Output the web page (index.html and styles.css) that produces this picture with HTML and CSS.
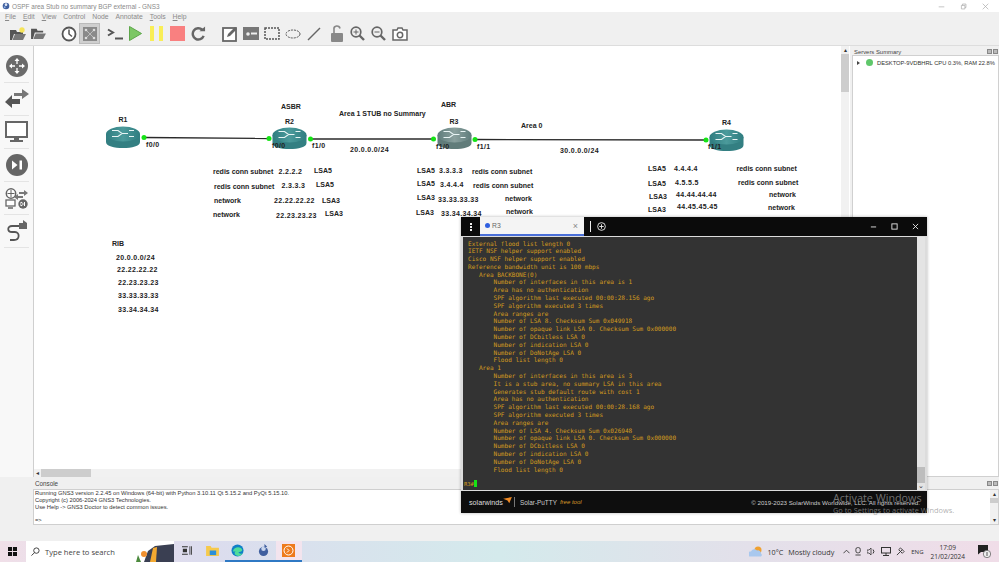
FILE: index.html
```html
<!DOCTYPE html>
<html lang="en">
<head>
<meta charset="utf-8">
<title>OSPF area Stub no summary BGP external - GNS3</title>
<link rel="stylesheet" href="styles.css">
</head>
<body>
<div class="app">
  <header class="titlebar">
    <svg class="appicon" viewBox="0 0 12 12"><circle cx="6" cy="6" r="5" fill="#3f5f9f"/><circle cx="6" cy="4" r="2" fill="#dfe7f5"/><circle cx="4" cy="8" r="1.5" fill="#8fb0e0"/></svg>
    <span class="title">OSPF area Stub no summary BGP external - GNS3</span>
    <div class="winctl">
      <svg viewBox="0 0 10 10"><path d="M1 5.5h8" stroke="#aaa" fill="none"/></svg>
      <svg viewBox="0 0 10 10"><path d="M2 3.5h5v5H2zM3.5 3.5V1.500h5v5H7" stroke="#aaa" fill="none"/></svg>
      <svg viewBox="0 0 10 10"><path d="M1 1l8 8M9 1l-8 8" stroke="#aaa" fill="none"/></svg>
    </div>
  </header>
  <nav class="menubar">
    <span><u>F</u>ile</span><span><u>E</u>dit</span><span><u>V</u>iew</span><span>Control</span><span>Node</span><span>Annotate</span><span><u>T</u>ools</span><span><u>H</u>elp</span>
  </nav>
  <div class="toolbar">
    <div class="tb"><svg viewBox="0 0 18 14" width="18" height="14"><path d="M1 13V3h6l1 2h6v2H5L3 13z" fill="#555"/><path d="M3.500 13L6 7h11l-3 6z" fill="#777"/><circle cx="13" cy="3" r="2.700" fill="#f6e45a"/></svg></div>
    <div class="tb"><svg viewBox="0 0 18 14" width="17" height="13"><path d="M1 13V2h6l1 2h6v2H5L3 13z" fill="#555"/><path d="M3.500 13L6 7h11l-3 6z" fill="#777"/></svg></div>
    <div class="tb g9"><svg viewBox="0 0 16 16" width="16" height="16"><circle cx="8" cy="8" r="6.500" fill="#fff" stroke="#555" stroke-width="1.800"/><path d="M8 3.500V8l3 2.500" stroke="#555" stroke-width="1.500" fill="none"/></svg></div>
    <div class="tb sel"><svg viewBox="0 0 14 14" width="14" height="14"><rect width="14" height="14" fill="#8a8a8a"/><path d="M3 3l8 8M11 3l-8 8" stroke="#bbb"/><circle cx="3" cy="3" r="1.300" fill="#ddd"/><circle cx="11" cy="3" r="1.300" fill="#ddd"/><circle cx="3" cy="11" r="1.300" fill="#ddd"/><circle cx="11" cy="11" r="1.300" fill="#ddd"/></svg></div>
    <div class="tb g4"><svg viewBox="0 0 16 12" width="16" height="12"><path d="M1 1.500L6 4.500 1 7.500" stroke="#555" stroke-width="2" fill="none"/><path d="M8 10.500h8" stroke="#555" stroke-width="2"/></svg></div>
    <div class="tb"><svg viewBox="0 0 13 15" width="13" height="15"><path d="M0.500 0.500L12.500 7.500 0.500 14.500z" fill="#7cc765" stroke="#5da64a"/></svg></div>
    <div class="tb"><svg viewBox="0 0 13 15" width="13" height="15"><rect width="4" height="15" fill="#f9ee56"/><rect x="9" width="4" height="15" fill="#f9ee56"/></svg></div>
    <div class="tb"><svg viewBox="0 0 15 15" width="15" height="15"><rect width="15" height="15" fill="#f98080"/></svg></div>
    <div class="tb"><svg viewBox="0 0 16 16" width="15" height="15"><path d="M13.500 10.500A6 6 0 1 1 12 4" stroke="#666" stroke-width="2.600" fill="none"/><path d="M9 5.500h6v-5z" fill="#666"/></svg></div>
    <div class="tb g10"><svg viewBox="0 0 16 16" width="16" height="16"><rect x="1" y="2" width="13" height="13" fill="#fff" stroke="#666" stroke-width="1.800"/><path d="M5 11l1-3 7-7 2 2-7 7z" fill="#666"/></svg></div>
    <div class="tb"><svg viewBox="0 0 16 13" width="16" height="13"><rect width="16" height="13" fill="#777"/><circle cx="5" cy="7" r="1.800" fill="#eee"/><path d="M8 7.500h6v-2H8z" fill="#eee"/></svg></div>
    <div class="tb"><svg viewBox="0 0 16 13" width="16" height="13"><rect x="1" y="1" width="14" height="11" fill="none" stroke="#555" stroke-width="1.500" stroke-dasharray="2 1"/></svg></div>
    <div class="tb"><svg viewBox="0 0 16 10" width="16" height="10"><ellipse cx="8" cy="5" rx="7" ry="4" fill="none" stroke="#555" stroke-dasharray="2 1"/></svg></div>
    <div class="tb"><svg viewBox="0 0 14 14" width="14" height="14"><path d="M1 13L13 1" stroke="#666" stroke-width="1.500"/></svg></div>
    <div class="tb g2"><svg viewBox="0 0 14 17" width="14" height="17"><path d="M4 8V4.500a3 3 0 0 1 6-1" fill="none" stroke="#888" stroke-width="1.600"/><rect x="1" y="8" width="12" height="9" rx="1" fill="#888"/></svg></div>
    <div class="tb"><svg viewBox="0 0 15 15" width="15" height="15"><circle cx="6" cy="6" r="4.800" fill="none" stroke="#666" stroke-width="1.700"/><path d="M9.500 9.500L14 14" stroke="#666" stroke-width="2.400"/><path d="M3.500 6h5M6 3.500v5" stroke="#666"/></svg></div>
    <div class="tb"><svg viewBox="0 0 15 15" width="15" height="15"><circle cx="6" cy="6" r="4.800" fill="none" stroke="#666" stroke-width="1.700"/><path d="M9.500 9.500L14 14" stroke="#666" stroke-width="2.400"/><path d="M3.500 6h5" stroke="#666"/></svg></div>
    <div class="tb"><svg viewBox="0 0 16 14" width="16" height="14"><path d="M1 3h4l1-2h4l1 2h4v10H1z" fill="#fff" stroke="#666" stroke-width="1.500"/><circle cx="8" cy="8" r="2.700" fill="none" stroke="#666" stroke-width="1.500"/></svg></div>
  </div>
  <div class="workspace">
    <div class="upper">
      <aside class="dock">
        <div class="dockitem"><svg viewBox="0 0 22 22" width="22" height="22"><circle cx="11" cy="11" r="11" fill="#6b6b6b"/><path d="M11 3l2.500 3h-5zM11 19l2.500-3h-5zM3 11l3-2.500v5zM19 11l-3-2.500v5z" fill="#fff"/><path d="M11 6v3M11 13v3M6 11h3M13 11h3" stroke="#fff" stroke-width="1.300"/></svg></div>
        <div class="dockitem"><svg viewBox="0 0 24 20" width="24" height="20"><path d="M9 4h8V0l7 5-7 5V7H9z" fill="#777"/><path d="M15 10H7V6L0 13l7 6v-4h8z" fill="#555"/></svg></div>
        <div class="dockitem"><svg viewBox="0 0 23 23" width="23" height="23"><rect x="1" y="1" width="21" height="15" fill="#fff" stroke="#666" stroke-width="2"/><path d="M9 17h5v2h4v2H5v-2h4z" fill="#666"/></svg></div>
        <div class="dockitem"><svg viewBox="0 0 22 22" width="22" height="22"><circle cx="11" cy="11" r="11" fill="#666"/><path d="M6 6.500L11.500 11 6 15.500z" fill="#fff"/><rect x="13.500" y="6.500" width="2.500" height="9" fill="#fff"/></svg></div>
        <div class="dockitem"><svg viewBox="0 0 23 21" width="23" height="21"><circle cx="6" cy="5.500" r="4.700" fill="#fff" stroke="#666" stroke-width="1.500"/><path d="M6 2v7M2.500 5.500h7" stroke="#666"/><path d="M14 4h5V2l4 3-4 3V6h-5zM18 8h-5V6l-4 3 4 3v-2h5z" fill="#777"/><rect x="1" y="12" width="9" height="6" fill="#fff" stroke="#666" stroke-width="1.300"/><path d="M3 20h5" stroke="#666" stroke-width="1.500"/><circle cx="18" cy="16" r="4.700" fill="#666"/><path d="M16 14l2.500 2-2.500 2zM19.500 14v4" stroke="#fff"/></svg></div>
        <div class="dockitem"><svg viewBox="0 0 22 24" width="22" height="24"><path d="M15 7H6c-5 0-5 6 0 6h3c5 0 5 8-1 8H4" fill="none" stroke="#555" stroke-width="1.800"/><path d="M13 4h8v6h-8z" fill="#666"/><path d="M17 1l4 3-4 2z" fill="#666"/></svg></div>
      </aside>
      <main class="canvas">
        <svg class="scene" viewBox="34 47 807 423" width="807" height="423">
          <defs>
            <linearGradient id="body" x1="0" x2="1" y1="0" y2="0"><stop offset="0" stop-color="#2f7d80"/><stop offset=".5" stop-color="#4b9a9b"/><stop offset="1" stop-color="#2f7d80"/></linearGradient>
            <linearGradient id="bodyg" x1="0" x2="1" y1="0" y2="0"><stop offset="0" stop-color="#5f7d7c"/><stop offset=".5" stop-color="#8aa09e"/><stop offset="1" stop-color="#5f7d7c"/></linearGradient>
            <g id="marks"><path d="M-11 -3.500h6l4 3h6M-11 2.500h6l4 -3h6M11 -3.500h-5M11 2.500h-5" stroke="#e8f4f4" stroke-width="1.100" fill="none"/></g>
          </defs>
          <path class="link" d="M144 138.500L269 139.500"/>
          <path class="link" d="M310 140L433 140"/>
          <path class="link" d="M475 140.500L706 141"/>
          <g transform="translate(123 135)"><path d="M-17 0v8c0 4 8 6 17 6s17-2 17-6V0z" fill="#337f82"/><ellipse rx="17" ry="7.500" fill="url(#body)"/><use href="#marks"/></g>
          <g transform="translate(289.500 136)"><path d="M-17 0v8c0 4 8 6 17 6s17-2 17-6V0z" fill="#337f82"/><ellipse rx="17" ry="7.500" fill="url(#body)"/><use href="#marks"/></g>
          <g transform="translate(454.500 136)"><path d="M-17 0v8c0 4 8 6 17 6s17-2 17-6V0z" fill="#617c7a"/><ellipse rx="17" ry="7.500" fill="url(#bodyg)"/><use href="#marks"/></g>
          <g transform="translate(726.500 138)"><path d="M-17 0v8c0 4 8 6 17 6s17-2 17-6V0z" fill="#337f82"/><ellipse rx="17" ry="7.500" fill="url(#body)"/><use href="#marks"/></g>
          <circle class="dot" cx="144" cy="138.500" r="2.500"/><circle class="dot" cx="269" cy="139.500" r="2.500"/>
          <circle class="dot" cx="310.500" cy="140" r="2.500"/><circle class="dot" cx="433.500" cy="140" r="2.500"/>
          <circle class="dot" cx="475" cy="140.500" r="2.500"/><circle class="dot" cx="706" cy="141" r="2.500"/>

          <text x="118.500" y="123">R1</text><text x="285" y="125">R2</text><text x="449.500" y="125">R3</text><text x="722" y="125.500">R4</text>
          <text x="281" y="110">ASBR</text><text x="339" y="117">Area 1 STUB no Summary</text><text x="441" y="107.500">ABR</text><text x="521" y="128.500">Area 0</text>
          <text class="w" x="146" y="147.500">f0/0</text><text class="w" x="272" y="148.500">f0/0</text><text class="w" x="312" y="149">f1/0</text><text class="w" x="436" y="149.500">f1/0</text><text class="w" x="477" y="149.500">f1/1</text><text class="w" x="708" y="149.500">f1/1</text>
          <text class="w" x="350" y="153">20.0.0.0/24</text><text class="w" x="560" y="154">30.0.0.0/24</text>

          <text x="213" y="175">redis conn subnet</text><text class="w" x="278.500" y="175">2.2.2.2</text><text x="314" y="174">LSA5</text>
          <text x="214" y="190">redis conn subnet</text><text class="w" x="281.500" y="189">2.3.3.3</text><text x="316" y="188">LSA5</text>
          <text x="214" y="203.500">network</text><text class="w" x="274" y="203.500">22.22.22.22</text><text x="322" y="203.500">LSA3</text>
          <text x="213" y="217.500">network</text><text class="w" x="276" y="218.500">22.23.23.23</text><text x="325" y="216.500">LSA3</text>

          <text x="417" y="173.500">LSA5</text><text class="w" x="439" y="173.500">3.3.3.3</text><text x="472" y="175">redis conn subnet</text>
          <text x="417" y="186.500">LSA5</text><text class="w" x="440" y="188">3.4.4.4</text><text x="473" y="189">redis conn subnet</text>
          <text x="417" y="200.500">LSA3</text><text class="w" x="438" y="202.500">33.33.33.33</text><text x="505" y="202">network</text>
          <text x="416" y="215.500">LSA3</text><text class="w" x="441" y="216.500">33.34.34.34</text><text x="506" y="214.500">network</text>

          <text x="648" y="172">LSA5</text><text class="w" x="674" y="172">4.4.4.4</text><text x="736.500" y="172">redis conn subnet</text>
          <text x="648" y="186.500">LSA5</text><text class="w" x="675" y="185.500">4.5.5.5</text><text x="738" y="185.500">redis conn subnet</text>
          <text x="649" y="199.500">LSA3</text><text class="w" x="676" y="197.500">44.44.44.44</text><text x="769" y="198">network</text>
          <text x="648" y="212.500">LSA3</text><text class="w" x="677" y="209.500">44.45.45.45</text><text x="768" y="210.500">network</text>

          <text x="112" y="246.500">RIB</text>
          <text class="w" x="116" y="260.500">20.0.0.0/24</text><text class="w" x="117" y="273">22.22.22.22</text><text class="w" x="118" y="285.500">22.23.23.23</text><text class="w" x="118" y="299">33.33.33.33</text><text class="w" x="118" y="312.500">33.34.34.34</text>
        </svg>
        <div class="vscroll"><i class="arr">▴</i><i class="vthumb"></i></div>
        <div class="hscroll"><i class="arr">◂</i><i class="hthumb"></i></div>
      </main>
      <aside class="servers">
        <div class="dockhead"><span>Servers Summary</span><span class="dockbtns"><i></i><i></i></span></div>
        <div class="tree">
          <span class="twist"></span>
          <span class="led"></span>
          <span class="srv">DESKTOP-9VDBHRL CPU 0.3%, RAM 22.8%</span>
        </div>
      </aside>
    </div>
    <section class="console">
      <div class="dockhead conhead"><span>Console</span><span class="dockbtns"><i></i><i></i></span></div>
      <div class="conbody">
        <pre class="conlog">Running GNS3 version 2.2.45 on Windows (64-bit) with Python 3.10.11 Qt 5.15.2 and PyQt 5.15.10.
Copyright (c) 2006-2024 GNS3 Technologies.
Use Help -&gt; GNS3 Doctor to detect common issues.

=&gt;</pre>
        <div class="conscroll"><i class="arr">▴</i><i class="conthumb"></i><i class="arr arrdown">▾</i></div>
      </div>
    </section>
    <div class="status"></div>
  </div>
  <footer class="taskbar">
    <svg class="winlogo" viewBox="0 0 10 10"><path d="M0 0h4.500v4.500H0zM5.500 0H10v4.500H5.500zM0 5.500h4.500V10H0zM5.500 5.500H10V10H5.500z" fill="#111"/></svg>
    <div class="search">
      <svg viewBox="0 0 10 10" width="9" height="9"><circle cx="6" cy="4" r="3" fill="none" stroke="#333"/><path d="M4 6.200L0.500 9.500" stroke="#333"/></svg>
      <span class="searchtext">Type here to search</span>
      <svg class="searchart" viewBox="0 0 40 21" width="40" height="21"><rect width="40" height="21" fill="#fff"/><path d="M10 21l4-11 7-5 19-2v18z" fill="#3a3f52"/><path d="M16 21l3-14 4-1-1 15z" fill="#f3a931"/><path d="M2 21l2-7 3 7z" fill="#4c8a3d"/><circle cx="10" cy="13" r="3" fill="#f0902f"/></svg>
    </div>
    <div class="tbicons">
      <span class="ti"><svg viewBox="0 0 12 10" width="10" height="9"><path d="M0 0h7v1H0zM0 9h7v1H0zM1 3h5v4H1zM9 0h1v10H9zM11 0h1v10h-1z" fill="#333"/></svg></span>
      <span class="ti"><svg viewBox="0 0 14 12" width="13" height="11"><path d="M0 1h5l1 2h8v9H0z" fill="#f6c94c"/><rect x="4" y="6" width="7" height="5" fill="#2a8fd8"/></svg></span>
      <span class="ti active"><svg viewBox="0 0 14 14" width="13" height="13"><circle cx="7" cy="7" r="6.500" fill="#0f7fc8"/><path d="M2 8c1-5 8-6 10-2 .5 2-2 3-4 2.500 2 3 4 2 5 1-1 3-5 4-7 3C4 11.500 3 9 5 8z" fill="#4fdc9a"/></svg></span>
      <span class="ti active"><svg viewBox="0 0 12 14" width="11" height="13"><circle cx="6" cy="8" r="5" fill="#3f5f9f"/><circle cx="6" cy="5" r="2.500" fill="#c9d6ee"/><path d="M7 0l3 3-3 1z" fill="#3f5f9f"/></svg></span>
      <span class="ti active on"><svg viewBox="0 0 13 13" width="13" height="13"><rect width="13" height="13" fill="#ee7a1c"/><circle cx="6.500" cy="6.500" r="4.500" fill="none" stroke="#fff"/><path d="M5 4.500L7 6.500 5 8.500" stroke="#fff" fill="none"/></svg></span>
    </div>
    <div class="tray">
      <svg viewBox="0 0 14 11" width="14" height="11"><circle cx="9" cy="4" r="3.500" fill="#f0a030"/><path d="M1 10.500a2.500 2.500 0 0 1 1-5 3.500 3.500 0 0 1 6-1 3 3 0 0 1 4 3 2 2 0 0 1 0 3z" fill="#a9c8ee"/></svg>
      <span class="weather">10°C</span><span class="weather cloudy">Mostly cloudy</span>
      <svg class="tr1" viewBox="0 0 8 5" width="7" height="5"><path d="M0.500 4.500L4 1l3.500 3.500" stroke="#333" fill="none"/></svg>
      <svg class="tr2" viewBox="0 0 8 10" width="7" height="9"><rect x="1" y="0.500" width="5" height="6" rx="2" fill="none" stroke="#333"/><path d="M0.500 9h6" stroke="#333"/></svg>
      <svg class="tr2" viewBox="0 0 9 9" width="9" height="9"><path d="M0 3h2l2-2v7L2 6H0z" fill="none" stroke="#333" stroke-width=".800"/><path d="M6 2.500a3 3 0 0 1 0 4" stroke="#333" fill="none"/></svg>
      <svg class="tr2" viewBox="0 0 10 9" width="10" height="9"><rect x="0.500" y="0.500" width="9" height="5.500" fill="none" stroke="#333"/><path d="M5 6v2M2 8.500h6" stroke="#333"/></svg>
      <svg class="tr2" viewBox="0 0 10 10" width="9" height="9"><path d="M1 9L7 3M5 1l4 4-2 2-4-4z" stroke="#333" fill="none"/></svg>
      <span class="eng">ENG</span>
      <div class="clock"><span>17:09</span><span>21/02/2024</span></div>
      <svg class="notif" viewBox="0 0 13 13" width="13" height="13"><path d="M0 0h10v7H3L0 9.500z" fill="#222"/><circle cx="9" cy="9" r="3.700" fill="#eee" stroke="#555" stroke-width=".700"/><path d="M9 7v4" stroke="#333" stroke-width=".800"/></svg>
    </div>
  </footer>

  <div class="term">
    <div class="termtabs">
      <div class="kebab"><i></i><i></i><i></i></div>
      <div class="tab"><span class="tabdot"></span><span class="tabname">R3</span><span class="tabx">×</span></div>
      <span class="tabsep"></span>
      <svg class="tabplus" viewBox="0 0 10 10" width="9" height="9"><circle cx="5" cy="5" r="4.300" fill="none" stroke="#eee"/><path d="M5 2.500v5M2.500 5h5" stroke="#eee"/></svg>
      <div class="termctl">
        <svg viewBox="0 0 8 8" width="7" height="7"><path d="M1 4.500h6" stroke="#eee"/></svg>
        <svg viewBox="0 0 8 8" width="7" height="7"><rect x="1" y="1" width="6" height="6" fill="none" stroke="#eee"/></svg>
        <svg viewBox="0 0 8 8" width="7" height="7"><path d="M1 1l6 6M7 1L1 7" stroke="#eee"/></svg>
      </div>
    </div>
    <div class="termbody">
      <pre class="termtext">External flood list length 0
IETF NSF helper support enabled
Cisco NSF helper support enabled
Reference bandwidth unit is 100 mbps
   Area BACKBONE(0)
       Number of interfaces in this area is 1
       Area has no authentication
       SPF algorithm last executed 00:00:28.156 ago
       SPF algorithm executed 3 times
       Area ranges are
       Number of LSA 8. Checksum Sum 0x049918
       Number of opaque link LSA 0. Checksum Sum 0x000000
       Number of DCbitless LSA 0
       Number of indication LSA 0
       Number of DoNotAge LSA 0
       Flood list length 0
   Area 1
       Number of interfaces in this area is 3
       It is a stub area, no summary LSA in this area
       Generates stub default route with cost 1
       Area has no authentication
       SPF algorithm last executed 00:00:28.168 ago
       SPF algorithm executed 3 times
       Area ranges are
       Number of LSA 4. Checksum Sum 0x026948
       Number of opaque link LSA 0. Checksum Sum 0x000000
       Number of DCbitless LSA 0
       Number of indication LSA 0
       Number of DoNotAge LSA 0
       Flood list length 0
</pre>
      <div class="prompt"><span>R3#</span><i class="cursor"></i></div>
      <div class="termscroll"><i class="tthumb"></i><i class="arrt">⌄</i></div>
    </div>
    <div class="termfoot">
      <span class="sw">solarwinds</span>
      <svg class="swmark" viewBox="0 0 10 8" width="9" height="7"><path d="M0 2l10-2-3 7-2-3z" fill="#f08a24"/></svg>
      <span class="footsep"></span>
      <span class="sp">Solar-PuTTY</span><span class="free">free tool</span>
      <span class="copy">© 2019-2023 SolarWinds Worldwide, LLC. All rights reserved.</span>
    </div>
  </div>
  <div class="activate"><span class="act1">Activate Windows</span><span class="act2">Go to Settings to activate Windows.</span></div>
</div>
</body>
</html>
```
FILE: styles.css
```css
* { box-sizing: border-box; }
html, body { margin: 0; padding: 0; }
body { width: 999px; height: 562px; overflow: hidden; background: #f0f0f0; font-family: "Liberation Sans", Arial, sans-serif; }
.app { position: relative; width: 999px; height: 562px; display: flex; flex-direction: column; }
i { display: block; font-style: normal; }

.titlebar { height: 12px; background: #fff; display: flex; align-items: center; padding-left: 2px; }
.appicon { width: 8px; height: 8px; margin-right: 2px; }
.title { font-size: 6.450px; color: #8a8a8a; }
.winctl { margin-left: auto; display: flex; gap: 15px; padding-right: 10px; }
.winctl svg { width: 7px; height: 7px; }

.menubar { height: 10px; background: #f0f0f0; display: flex; align-items: center; padding-left: 5px; gap: 7px; font-size: 6.800px; color: #8a8a8a; }
.menubar span { line-height: 10px; }

.toolbar { height: 24px; background: #f0f0f0; border-bottom: 1px solid #ddd; display: flex; align-items: center; padding-left: 7px; }
.tb { width: 21px; height: 21px; display: flex; align-items: center; justify-content: center; flex: none; }
.sel { background: #cfcfcf; border: 1px solid #bbb; }
.g2 { margin-left: 2px; }
.g4 { margin-left: 4px; }
.g9 { margin-left: 9px; }
.g10 { margin-left: 10px; }

.workspace { flex: 1; display: flex; flex-direction: column; min-height: 0; }
.upper { height: 431px; display: flex; background: #f0f0f0; }
.dock { width: 34px; flex: none; background: #f8f8f8; border-right: 1px solid #cfcfcf; padding-top: 4px; }
.dockitem { height: 33px; margin: 0 4px; border-bottom: 1px solid #e4e4e4; display: flex; align-items: center; justify-content: center; }

.canvas { position: relative; width: 816px; flex: none; background: #fff; }
.scene { display: block; }
.scene text { font-family: "Liberation Sans", Arial, sans-serif; font-weight: 700; font-size: 7px; fill: #222; }
.scene text.w { letter-spacing: .35px; }
.link { stroke: #2a2a2a; stroke-width: 1.300; fill: none; }
.dot { fill: #16e316; }
.vscroll { position: absolute; right: 1px; top: 0; width: 8px; height: 423px; background: #f1f1f1; display: flex; flex-direction: column; }
.vthumb { width: 8px; height: 38px; background: #cdcdcd; }
.arr { font-size: 6px; line-height: 8px; height: 8px; text-align: center; color: #333; }
.hscroll { position: absolute; left: 0; bottom: 0; width: 808px; height: 8px; background: #f1f1f1; display: flex; }
.hscroll .arr { width: 7px; }
.hthumb { width: 50px; height: 8px; background: #cdcdcd; }

.servers { flex: 1; display: flex; flex-direction: column; padding: 2px 0 0 2px; min-width: 0; }
.dockhead { height: 7px; display: flex; align-items: center; justify-content: space-between; font-size: 5.900px; color: #444; padding: 0 1px 0 2px; }
.dockbtns { display: flex; gap: 1px; }
.dockbtns i { width: 5px; height: 5px; background: #bbb; border: 1px solid #888; }
.tree { flex: 1; background: #fff; border: 1px solid #d0d0d0; display: flex; align-items: flex-start; padding: 3px 0 0 4px; font-size: 5.750px; color: #333; line-height: 8px; white-space: nowrap; overflow: hidden; }
.twist { width: 0; height: 0; margin: 2px 6px 0 0; border-left: 3px solid #444; border-top: 2px solid transparent; border-bottom: 2px solid transparent; flex: none; }
.led { width: 7px; height: 7px; margin-right: 4px; border-radius: 50%; background: #5fc76a; flex: none; }
.srv { flex: none; }

.console { height: 48px; padding-left: 33px; background: #f0f0f0; }
.conhead { height: 12px; padding: 0 1px 0 2px; font-size: 6.300px; }
.conbody { height: 36px; display: flex; background: #fff; border: 1px solid #cfcfcf; }
.conlog { margin: 0; flex: 1; padding-left: 1px; font: 5.750px/6.800px "Liberation Sans", Arial, sans-serif; color: #333; }
.conscroll { width: 8px; background: #f1f1f1; display: flex; flex-direction: column; }
.conthumb { height: 5px; background: #cdcdcd; }
.arrdown { margin-top: auto; }

.status { height: 16px; background: #f0f0f0; }

.taskbar { height: 21px; display: flex; align-items: center; background: linear-gradient(90deg, #f0dfe8 0, #dcdcee 20%, #d4eaec 50%, #e3e0ea 75%, #f0dde8 100%); flex: none; }
.winlogo { width: 9px; height: 9px; margin-left: 8px; flex: none; }
.search { width: 148px; height: 21px; margin-left: 9px; background: #fff; display: flex; align-items: center; padding-left: 5px; position: relative; font-family: "Open Sans", sans-serif; }
.searchtext { font-size: 7.600px; color: #444; margin-left: 5px; }
.searchart { margin-left: auto; }
.tbicons { display: flex; margin-left: 0; }
.ti { width: 25.500px; height: 21px; display: flex; align-items: center; justify-content: center; border-bottom: 2px solid transparent; }
.ti.active { border-bottom-color: #2f79c4; }
.ti.on { background: #f3e4ee; }
.tray { margin-left: auto; display: flex; align-items: center; font: 7.200px "Open Sans", sans-serif; color: #333; padding-right: 8px; }
.weather { margin-left: 4px; }
.cloudy { margin-left: 5px; }
.tr1 { margin-left: 9px; }
.tr2 { margin-left: 5px; }
.eng { font-size: 6px; margin-left: 6px; }
.clock { display: flex; flex-direction: column; align-items: center; font-size: 6.500px; line-height: 9px; margin-left: 7px; }
.notif { margin-left: 13px; }

.term { position: absolute; left: 461px; top: 217px; width: 466px; height: 296px; display: flex; flex-direction: column; background: #dcdcdc; box-shadow: 0 0 3px rgba(0,0,0,.3); }
.termtabs { height: 19px; background: #0b0b0b; display: flex; align-items: center; color: #eee; }
.kebab { width: 19px; display: flex; flex-direction: column; align-items: center; gap: 1px; }
.kebab i { width: 2px; height: 2px; background: #eee; }
.tab { width: 104px; height: 19px; background: #f4f4f4; border-bottom: 2px solid #4a6fd8; display: flex; align-items: center; padding: 0 6px 0 5px; color: #666; font-size: 6.800px; }
.tabdot { width: 5px; height: 5px; border-radius: 50%; background: #2f5fe0; margin-right: 2px; }
.tabx { margin-left: auto; font-size: 9px; color: #888; }
.tabsep { width: 1px; height: 11px; background: #eee; margin-left: 6px; }
.tabplus { margin-left: 6px; }
.termctl { margin-left: auto; display: flex; gap: 14px; padding-right: 8px; }
.termbody { position: relative; flex: 1; margin: 1px 2px 0 2px; background: #333; min-height: 0; }
.termtext { margin: 0; padding: 2.500px 0 0 5px; font: 6.070px/7.800px "DejaVu Sans Mono", monospace; color: #d49c1e; }
.prompt { position: absolute; left: 1px; top: 243px; height: 8px; display: flex; font: 5.500px/8px "DejaVu Sans Mono", monospace; color: #d49c1e; }
.cursor { width: 3px; height: 7px; background: #16e316; }
.termscroll { position: absolute; right: 0; top: 0; bottom: 0; width: 8px; background: #e4e4e4; display: flex; flex-direction: column; justify-content: flex-end; }
.tthumb { height: 16px; background: #bdbdbd; }
.arrt { height: 7px; font: 7px/5px "Liberation Sans", sans-serif; text-align: center; color: #333; }
.termfoot { height: 22px; background: #0e0e0e; display: flex; align-items: center; color: #ccc; padding-left: 8px; margin-top: 1px; }
.sw { font-size: 7.200px; color: #ddd; }
.swmark { margin: 0 0 3px 0; }
.footsep { width: 1px; height: 10px; background: #777; margin: 0 5px 0 2px; }
.sp { font-size: 6.400px; }
.free { font-size: 6px; font-style: italic; color: #d89a2a; margin-left: 3px; }
.copy { margin-left: auto; font-size: 6.200px; padding-right: 7px; }

.activate { position: absolute; left: 833px; top: 490px; display: flex; flex-direction: column; color: rgba(150,150,150,.75); font-family: "Open Sans", sans-serif; white-space: nowrap; }
.act1 { font-size: 10.800px; line-height: 15px; }
.act2 { font-size: 7.400px; line-height: 10px; }
```
